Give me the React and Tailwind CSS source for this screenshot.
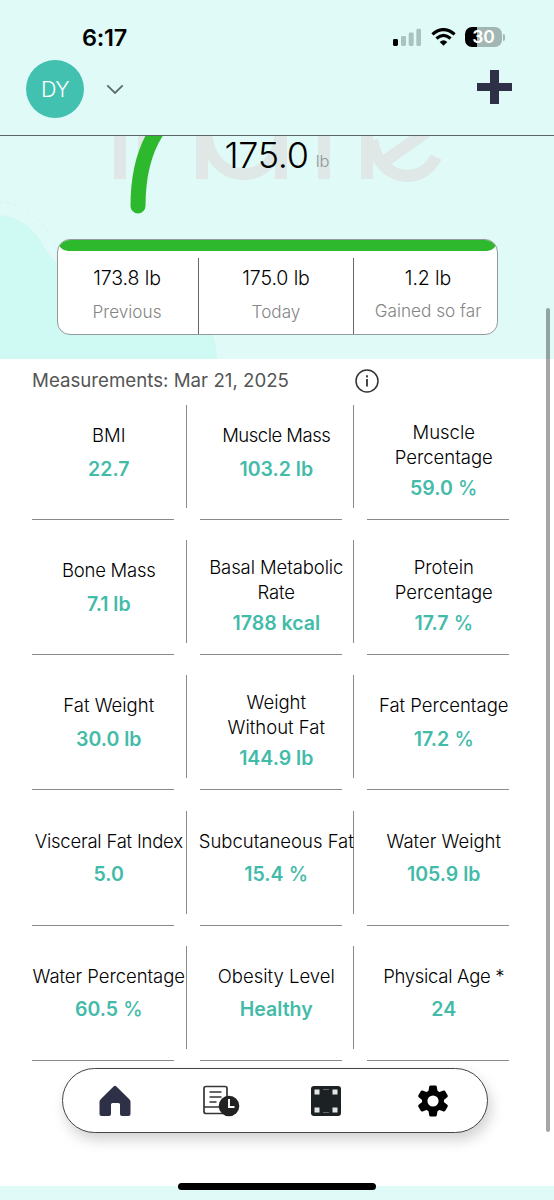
import React from "react";

const HEAD = "font-['Inter',sans-serif]";

function StatusBar() {
  return (
    <div className="flex h-[58px] items-start justify-between pl-[82px] pr-[49px] pt-[26px]">
      <span className="text-[23.5px] font-semibold leading-6 tracking-[-0.2px]">6:17</span>
      <div className="flex items-center pt-px">
        <svg width="28" height="18" viewBox="0 0 28 18">
          <rect x="0" y="11" width="5" height="7" rx="1.4" fill="#000" />
          <rect x="8" y="8" width="5" height="10" rx="1.4" fill="#a9c3c0" />
          <rect x="15.7" y="4.5" width="5" height="13.5" rx="1.4" fill="#a9c3c0" />
          <rect x="23.3" y="0.7" width="4.7" height="17.3" rx="1.4" fill="#a9c3c0" />
        </svg>
        <svg className="ml-[10px]" width="25" height="18" viewBox="0 0 25 18" fill="none" stroke="#000">
          <path d="M1.4 6.4 Q12.5 -3.2 23.6 6.4" strokeWidth="3.2" />
          <path d="M5.4 10.5 Q12.5 4.3 19.6 10.5" strokeWidth="3.1" />
          <path d="M8.7 14 Q12.5 10.4 16.3 14 L12.5 17.8 Z" fill="#000" stroke="none" />
        </svg>
        <div className="ml-[9px] flex h-5 w-[37px] items-center justify-center rounded-[7px] bg-[linear-gradient(90deg,#000_32%,#a2b6b3_32%)] text-[17.5px] font-semibold leading-5 text-white">
          30
        </div>
        <div className="ml-px h-[7px] w-[2px] rounded-r bg-[#a2b6b3]" />
      </div>
    </div>
  );
}

function Header() {
  return (
    <header className="h-[136px] border-b border-[#59696a] bg-[#e0faf7]">
      <StatusBar />
      <div className="flex items-start pl-[26px] pr-[42px]">
        <div className="mt-[2px] flex size-[58px] items-center justify-center rounded-full bg-[#43c1b0] pt-px text-[21.5px] font-light tracking-[-0.6px] text-white">
          DY
        </div>
        <svg className="ml-[22px] mt-[26px]" width="18" height="11" viewBox="0 0 18 11" fill="none" stroke="#5c6b6b" strokeWidth="1.8">
          <path d="M1.3 1.3 9 9l7.7-7.7" />
        </svg>
        <svg className="ml-auto mt-3" width="35" height="34" viewBox="0 0 35 34" fill="#2e3047">
          <path d="M13 0h9v13h13v8H22v13h-9V21H0v-8h13z" />
        </svg>
      </div>
    </header>
  );
}

function Stat({ value, label, className, labelClass }) {
  return (
    <div className={"flex flex-col items-center pt-2 " + className}>
      <span className="text-[19.5px] leading-6 tracking-[-0.1px] text-black">{value}</span>
      <span className={"text-[17.2px] font-light leading-6 text-[#858585] " + labelClass}>{label}</span>
    </div>
  );
}

function Hero() {
  return (
    <section className="relative h-[223px] bg-[#e0faf7] px-[57px] font-light">
      <svg className="absolute left-0 top-0" width="554" height="223" viewBox="0 136 554 223" fill="none">
        <path d="M0 215C20 217 34 229 42 243C48 254 53 261 62 267C150 270 217 300 217 359H0Z" fill="#cff9f3" />
        <path d="M0 202C26 205 40 218 56 244" stroke="#d5f5f0" strokeWidth="1" strokeDasharray="3 4" />
        <g stroke="#dfe8e6" strokeWidth="12">
          <path d="M120 130V179M144 130V151M202 130V179M281 130V179M324 130V179M367 130V179" />
          <path d="M206 130C208 189 279 189 281 130" />
          <path d="M378 166L426 132M372 140C380 184 423 185 436 157" />
        </g>
        <path d="M162 124Q138 154 138 206" stroke="#2eb82e" strokeWidth="15" strokeLinecap="round" />
      </svg>
      <div className="relative flex h-[103px] items-start justify-center pt-px">
        <span className="text-[36px] font-light leading-9 tracking-[-0.3px] text-black">175.0</span>
        <span className="ml-[7px] mt-[12px] text-[16.5px] leading-6 text-[#8b9a98]">lb</span>
      </div>
      <div className="relative h-[96px] w-[441px] overflow-hidden rounded-[13px] border border-[#929b9a] bg-white">
        <div className="h-[11px] rounded-b-[10px] bg-[#2eb82e]" />
        <div className="flex h-[84px] pt-[7px]">
          <Stat value="173.8 lb" label="Previous" className="w-[141px] border-r border-[#666] pr-[2px]" labelClass="mt-[10px]" />
          <Stat value="175.0 lb" label="Today" className="w-[155px] border-r border-[#666]" labelClass="mt-[10px]" />
          <Stat value="1.2 lb" label="Gained so far" className="flex-1 pl-[5px]" labelClass="mt-[8.5px]" />
        </div>
      </div>
    </section>
  );
}

const metrics = [
  { lines: ["BMI"], value: "22.7" },
  { lines: ["Muscle Mass"], value: "103.2", unit: "lb", tracking: "tracking-[-0.5px]" },
  { lines: ["Muscle", "Percentage"], value: "59.0", unit: "%" },
  { lines: ["Bone Mass"], value: "7.1", unit: "lb", tracking: "tracking-[-0.25px]" },
  { lines: ["Basal Metabolic", "Rate"], value: "1788", unit: "kcal", tracking: "tracking-[-0.1px]" },
  { lines: ["Protein", "Percentage"], value: "17.7", unit: "%" },
  { lines: ["Fat Weight"], value: "30.0", unit: "lb" },
  { lines: ["Weight", "Without Fat"], value: "144.9", unit: "lb" },
  { lines: ["Fat Percentage"], value: "17.2", unit: "%" },
  { lines: ["Visceral Fat Index"], value: "5.0", tracking: "tracking-[-0.22px]" },
  { lines: ["Subcutaneous Fat"], value: "15.4", unit: "%" },
  { lines: ["Water Weight"], value: "105.9", unit: "lb" },
  { lines: ["Water Percentage"], value: "60.5", unit: "%", tracking: "tracking-[-0.05px]" },
  { lines: ["Obesity Level"], value: "Healthy" },
  { lines: ["Physical Age *"], value: "24", tracking: "tracking-[-0.3px]" },
];

function Metric({ lines, value, unit, tracking = "", last }) {
  const two = lines.length > 1;
  return (
    <div className="h-[135.2px]">
      <div
        className={
          "flex h-[103px] flex-col items-center whitespace-nowrap border-r " +
          (last ? "border-transparent " : "border-[#8a8a8a] ") +
          (two ? "pt-[14.6px]" : "pt-[18px]")
        }
      >
        {lines.map((l) => (
          <span key={l} className={"text-[18.5px] font-light leading-[25.3px] text-black " + tracking}>{l}</span>
        ))}
        <span className={"text-[19.5px] font-semibold leading-[25px] text-[#43bba9] " + (two ? "mt-[5.4px]" : "mt-[8.4px]")}>
          {value}
          {unit && <span className={unit === "%" ? "font-medium" : "font-semibold"}> {unit}</span>}
        </span>
      </div>
      <div className="mt-[11px] h-px w-[142px] bg-[#8a8a8a]" />
    </div>
  );
}

function TabBar() {
  return (
    <nav className="absolute left-[62px] top-[1068px] flex h-[65px] w-[426px] items-center rounded-full border border-[#444] bg-white pl-[36px] shadow-[3px_7px_14px_rgba(0,0,0,0.18)]">
      <svg width="32" height="32" viewBox="0 0 32 32" fill="#2e3047">
        <path d="M14.8 1.3Q16 .1 17.2 1.3L30.3 14.2Q31.5 15.4 31.5 17V29Q31.5 31 29.5 31H23Q21 31 21 29V19.5Q21 18 19.5 18H13.5Q12 18 12 19.5V29Q12 31 10 31H2.5Q.5 31 .5 29V17Q.5 15.4 1.7 14.2Z" />
      </svg>
      <svg className="ml-[71px]" width="38" height="32" viewBox="0 0 38 32" fill="none" stroke="#353535" strokeWidth="1.7">
        <rect x="2" y="1.5" width="23" height="27" rx="2" />
        <path d="M2 22h20M7.5 7h12M7.5 12h12M7.5 17h7" />
        <circle cx="27" cy="21" r="10.3" fill="#222" stroke="none" />
        <path d="M27 14v8h5.500" stroke="#fff" strokeWidth="1.9" />
      </svg>
      <svg className="ml-[71px]" width="30" height="30" viewBox="0 0 30 30">
        <rect width="30" height="30" rx="3" fill="#1c2224" />
        <path d="M3.5 3.5h5v5h-5zM21.5 3.5h5v5h-5zM3.5 21.5h5v5h-5zM21.5 21.5h5v5h-5z" fill="#e5e5e5" />
        <path d="M12 3.5h6M12 26.5h6" stroke="#666" />
      </svg>
      <svg className="ml-[76px]" width="32" height="32" viewBox="-16 -16 32 32" fill="#000">
        <circle r="8.3" fill="none" stroke="#000" strokeWidth="5.4" />
        {[0, 60, 120, 180, 240, 300].map((angle) => (
          <path key={angle} transform={`rotate(${angle})`} d="M-4.6-9.5-3.8-14.3Q-3.6-15.5-2.4-15.5H2.4Q3.6-15.5 3.8-14.3L4.6-9.5Z" />
        ))}
      </svg>
    </nav>
  );
}

export default function App() {
  return (
    <div className={"relative flex h-[1200px] w-[554px] flex-col overflow-hidden bg-white text-black " + HEAD}>
      <Header />
      <Hero />
      <main className="h-[827px] overflow-hidden pl-8">
        <div className="flex h-[46px] items-start pt-[9px]">
          <span className="w-[323px] pt-px text-[18.7px] leading-6 text-[#555]">Measurements: Mar 21, 2025</span>
          <svg className="mt-px" width="24" height="24" viewBox="0 0 24 24" fill="none" stroke="#333" strokeWidth="1.5">
            <circle cx="12" cy="12" r="11" />
            <path d="M12 10v7.5M12 6.2v2.2" strokeWidth="1.8" />
          </svg>
        </div>
        <div className="grid grid-cols-[154.5px_154.5px_154.5px] gap-x-[13px]">
          {metrics.map((metric, i) => (
            <Metric key={metric.lines.join(" ")} {...metric} last={i % 3 === 2} />
          ))}
        </div>
      </main>
      <footer className="h-[14px] bg-[#e0faf7]" />
      <TabBar />
      <div className="absolute left-[546px] top-[308px] h-[824px] w-1 rounded-full bg-black/35" />
      <div className="absolute left-[178px] top-[1183px] h-[7px] w-[198px] rounded-full bg-black" />
    </div>
  );
}
